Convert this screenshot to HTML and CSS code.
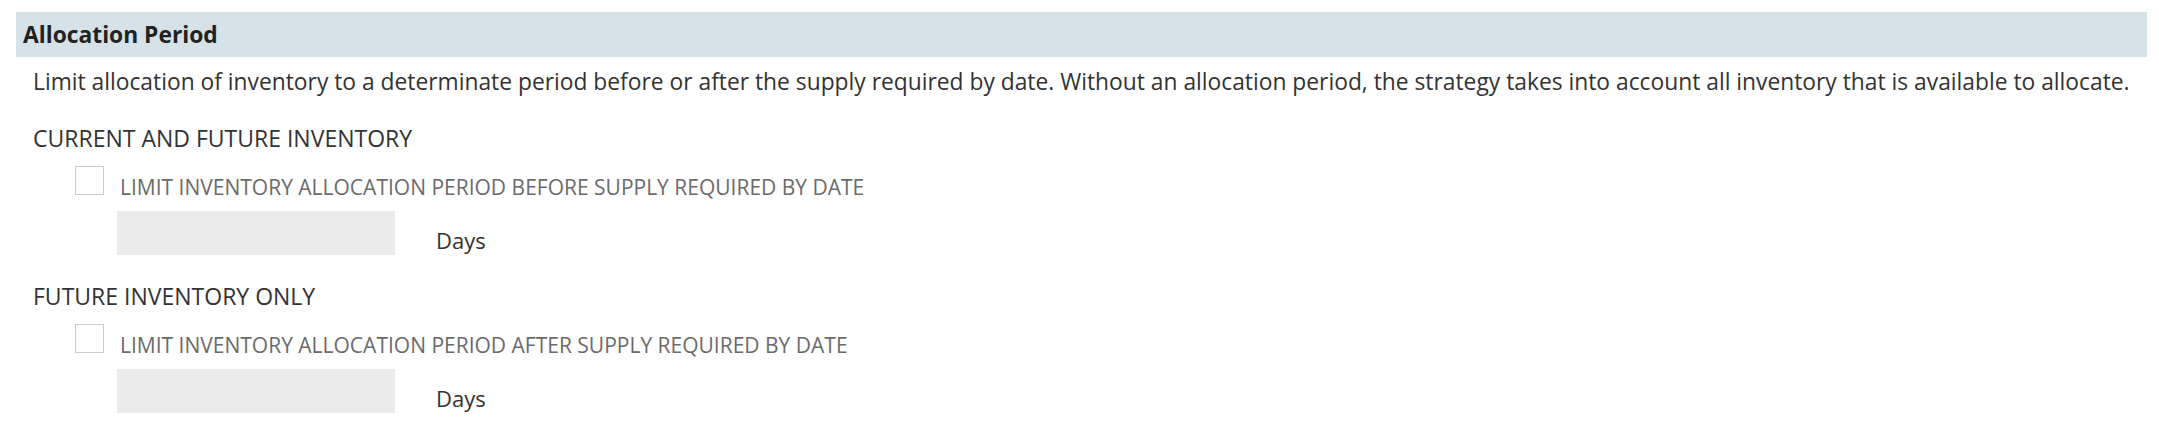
FILE: index.html
```html
<!DOCTYPE html>
<html>
<head>
<meta charset="utf-8">
<link rel="stylesheet" href="styles.css">
</head>
<body>
<div class="panel">
  <div class="header">Allocation Period</div>
  <div class="content">
    <p class="desc">Limit allocation of inventory to a determinate period before or after the supply required by date. Without an allocation period, the strategy takes into account all inventory that is available to allocate.</p>
    <div class="section">
      <div class="section-title">CURRENT AND FUTURE INVENTORY</div>
      <div class="check-row">
        <span class="checkbox"></span>
        <span class="check-label">LIMIT INVENTORY ALLOCATION PERIOD BEFORE SUPPLY REQUIRED BY DATE</span>
      </div>
      <div class="input-row">
        <span class="input"></span>
        <span class="unit">Days</span>
      </div>
    </div>
    <div class="section">
      <div class="section-title">FUTURE INVENTORY ONLY</div>
      <div class="check-row">
        <span class="checkbox"></span>
        <span class="check-label">LIMIT INVENTORY ALLOCATION PERIOD AFTER SUPPLY REQUIRED BY DATE</span>
      </div>
      <div class="input-row">
        <span class="input"></span>
        <span class="unit">Days</span>
      </div>
    </div>
  </div>
</div>
</body>
</html>
```

FILE: styles.css
```css
html, body {
  margin: 0;
  padding: 0;
  background: #ffffff;
}
body {
  font-family: "Open Sans", "Liberation Sans", sans-serif;
  color: #333333;
}
.panel {
  padding: 12px 12px 0 16px;
}
.header {
  height: 45px;
  background: #d5e2e8;
  display: flex;
  align-items: center;
  padding-left: 7px;
  font-size: 22.8px;
  font-weight: 700;
  color: #222222;
}
.content {
  padding-left: 17px;
}
.desc {
  margin: 10px 0 0 0;
  font-size: 22.8px;
  line-height: 30px;
  white-space: nowrap;
}
.section {
  display: flex;
  flex-direction: column;
}
.section-title {
  margin-top: 26px;
  font-size: 23px;
  line-height: 30px;
}
.check-row {
  display: flex;
  align-items: flex-start;
  margin-top: 13px;
  padding-left: 42px;
  gap: 16px;
}
.checkbox {
  width: 27px;
  height: 27px;
  border: 1px solid #cccccc;
  background: #ffffff;
  flex: none;
}
.check-label {
  margin-top: 7px;
  font-size: 21px;
  line-height: 29px;
  color: #6b6b6b;
}
.input-row {
  display: flex;
  align-items: flex-start;
  margin-top: 9px;
  padding-left: 84px;
  gap: 41px;
}
.input {
  width: 278px;
  height: 44px;
  background: #ebebeb;
  flex: none;
}
.unit {
  margin-top: 13.5px;
  font-size: 22px;
  line-height: 30px;
}
```
